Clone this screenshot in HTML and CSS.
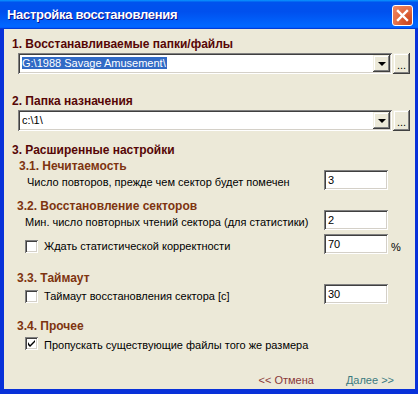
FILE: index.html
```html
<!DOCTYPE html>
<html lang="ru">

<head>
    <meta charset="UTF-8">
    <title>Настройка восстановления</title>
    <link rel="stylesheet" href="styles.css">
</head>

<body>

    <div class="window">
        <div class="titlebar">
            <span class="title">Настройка восстановления</span>
            <button class="close" type="button">
                <svg width="13" height="13" viewBox="0 0 13 13">
                    <path d="M2 2 L11 11 M11 2 L2 11" stroke="#fff" stroke-width="2.4" stroke-linecap="square"/>
                </svg>
            </button>
        </div>

        <div class="client">
            <div class="section h1">1. Восстанавливаемые папки/файлы</div>
            <div class="path-row">
                <div class="combo sunken">
                    <span class="combo-text"><span class="selected">G:\1988 Savage Amusement\</span></span>
                    <span class="drop raised"><i class="arrow"></i></span>
                </div>
                <button class="browse raised" type="button">...</button>
            </div>

            <div class="section h2">2. Папка назначения</div>
            <div class="path-row">
                <div class="combo sunken">
                    <span class="combo-text">c:\1\</span>
                    <span class="drop raised"><i class="arrow"></i></span>
                </div>
                <button class="browse raised" type="button">...</button>
            </div>

            <div class="section h3">3. Расширенные настройки</div>

            <div class="sub sub-31">3.1. Нечитаемость</div>
            <div class="row row-1">
                <span class="label">Число повторов, прежде чем сектор будет помечен</span>
                <span class="field sunken">3</span>
            </div>

            <div class="sub sub-32">3.2. Восстановление секторов</div>
            <div class="row row-2">
                <span class="label">Мин. число повторных чтений сектора (для статистики)</span>
                <span class="field sunken">2</span>
            </div>
            <div class="row row-3">
                <span class="check sunken"></span>
                <span class="label">Ждать статистической корректности</span>
                <span class="field sunken">70</span>
                <span class="unit">%</span>
            </div>

            <div class="sub sub-33">3.3. Таймаут</div>
            <div class="row row-4">
                <span class="check sunken"></span>
                <span class="label">Таймаут восстановления сектора [с]</span>
                <span class="field sunken">30</span>
            </div>

            <div class="sub sub-34">3.4. Прочее</div>
            <div class="row row-5">
                <span class="check sunken checked">
                    <svg width="7" height="7" viewBox="0 0 7 7">
                        <path d="M0 2 L0 5 L2 7 L7 2 L7 0 L2 5 Z" fill="#000"/>
                    </svg>
                </span>
                <span class="label">Пропускать существующие файлы того же размера</span>
            </div>

            <div class="footer">
                <span class="link cancel">&lt;&lt; Отмена</span>
                <span class="link next">Далее &gt;&gt;</span>
            </div>
        </div>
    </div>

</body>

</html>
```

FILE: styles.css
```css
body {
    margin: 0;
    background-color: #0831d9;
    font-family: "Liberation Sans", Arial, sans-serif;
    font-size: 11px;
    color: #000;
}

.window {
    width: 418px;
    height: 394px;
    display: flex;
    flex-direction: column;
    background-color: #0831d9;
}

/* title bar */
.titlebar {
    height: 29px;
    flex: none;
    display: flex;
    align-items: center;
    justify-content: space-between;
    padding: 0 5px 0 7px;
    background: linear-gradient(180deg, #0997ff, #0053ee 8%, #0050ee 40%, #0066ff 88%, #0066ff 93%, #005bff 95%, #003dd7 96%, #003dd7);
}

.title {
    color: #fff;
    font-weight: bold;
    font-size: 13px;
    text-shadow: 1px 1px #0f1089;
    letter-spacing: -0.3px;
}

.close {
    width: 21px;
    height: 21px;
    padding: 0;
    margin-top: 1px;
    border: 1px solid #fff;
    border-radius: 3px;
    background: radial-gradient(circle at 85% 85%, #cc4622 0, #d7582e 30%, #e5714a 60%, #f08a66 100%);
    display: flex;
    align-items: center;
    justify-content: center;
}

/* client area */
.client {
    flex: 1;
    margin: 0 3px 5px 4px;
    background-color: #ece9d8;
    padding: 0 5px 0 8px;
    display: flex;
    flex-direction: column;
}

.section {
    font-weight: bold;
    font-size: 12px;
    line-height: 12px;
    color: #560606;
}

.h1 { margin-top: 9px; }
.h2 { margin-top: 21px; }
.h3 { margin-top: 13px; }

.sub {
    font-weight: bold;
    font-size: 12px;
    line-height: 12px;
    color: #7e3410;
    padding-left: 5px;
}

.sub-31 { margin-top: 4px; padding-left: 7px; }
.sub-32 { margin-top: 10px; }
.sub-33 { margin-top: 18px; }
.sub-34 { margin-top: 16px; }

/* 3d borders */
.sunken {
    background-color: #fff;
    box-shadow: inset 1px 1px #808080, inset -1px -1px #fff, inset 2px 2px #404040, inset -2px -2px #d4d0c8;
}

.raised {
    background-color: #ece9d8;
    box-shadow: inset -1px -1px #404040, inset 1px 1px #f1efe2, inset -2px -2px #808080, inset 2px 2px #fff;
}

/* path combos */
.path-row {
    display: flex;
    gap: 1px;
    margin-top: 3px;
    padding-left: 6px;
    height: 21px;
}

.combo {
    flex: 1;
    display: flex;
    align-items: center;
    padding: 2px 2px 2px 4px;
}

.combo-text {
    flex: 1;
    line-height: 13px;
}

.selected {
    background-color: #316ac5;
    color: #fff;
    padding: 0 1px 0 0;
}

.drop {
    width: 17px;
    height: 17px;
    display: flex;
    align-items: center;
    justify-content: center;
}

.arrow {
    width: 0;
    height: 0;
    border-left: 4px solid transparent;
    border-right: 4px solid transparent;
    border-top: 4px solid #000;
    margin-top: 1px;
}

.browse {
    width: 17px;
    height: 21px;
    padding: 0 0 3px;
    border: none;
    font-family: "Liberation Sans", Arial, sans-serif;
    font-size: 11px;
    line-height: 11px;
    display: flex;
    align-items: flex-end;
    justify-content: center;
}

/* option rows */
.row {
    display: flex;
    align-items: center;
    height: 20px;
    padding-left: 13px;
}

.row-1 { margin-top: -2px; padding-left: 15px; }
.row-2 { margin-top: -2px; }
.row-3 { margin-top: 4px; }
.row-4 { margin-top: 0; }
.row-5 { margin-top: 1px; }

.label {
    flex: 1;
    padding-top: 3px;
}

.check + .label {
    margin-left: 6px;
}

.check {
    width: 13px;
    height: 13px;
    flex: none;
    margin-top: 5px;
    display: flex;
    align-items: center;
    justify-content: center;
}

.row-5 .check {
    margin-top: 0;
}

.field {
    width: 64px;
    height: 20px;
    box-sizing: border-box;
    padding: 3px 4px;
    line-height: 14px;
    flex: none;
    margin-right: 22px;
}

.row-3 .field {
    margin-right: 3px;
}

.unit {
    width: 19px;
    padding-top: 6px;
}

/* footer */
.footer {
    margin-top: 20px;
    display: flex;
    justify-content: flex-end;
    gap: 32px;
    padding-right: 16px;
    font-size: 11px;
    line-height: 14px;
}

.cancel { color: #8a3a3a; }
.next { color: #3a7a80; }
```
